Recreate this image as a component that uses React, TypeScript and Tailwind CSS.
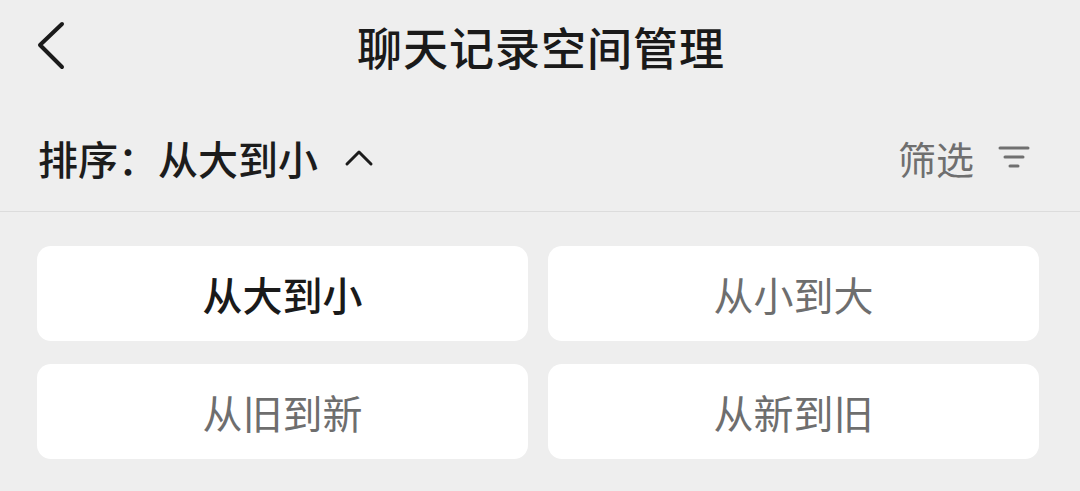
import React, { useState } from 'react';

const options = ['从大到小', '从小到大', '从旧到新', '从新到旧'];

const App: React.FC = () => {
  const [sort, setSort] = useState('从大到小');

  return (
    <div
      className="w-[1080px] h-[491px] bg-[#eeeeee] overflow-hidden flex flex-col"
      style={{ fontFamily: '"Noto Sans CJK SC", "Noto Sans", sans-serif' }}
    >
      {/* header */}
      <div className="h-[90px] shrink-0 relative flex items-center justify-center">
        <button className="absolute left-[36px] top-[20px] w-[32px] h-[52px] flex items-center justify-center">
          <svg width="32" height="52" viewBox="0 0 32 52" fill="none">
            <path d="M26 4 L4 25 L26 47" stroke="#1a1a1a" strokeWidth="4" strokeLinecap="round" strokeLinejoin="round" />
          </svg>
        </button>
        <h1 className="text-[45px] font-medium text-[#1a1a1a] leading-none tracking-[1px] pt-[2px] pl-[2px]">聊天记录空间管理</h1>
      </div>

      {/* sort row */}
      <div className="h-[122px] shrink-0 flex items-center justify-between pl-[38px] pr-[50px] pt-[14px] border-b border-[#dcdcdc]">
        <div className="flex items-center">
          <span className="text-[40px] font-medium text-[#1c1c1c] leading-none">排序：{sort}</span>
          <svg className="ml-[26px]" width="30" height="20" viewBox="0 0 30 20" fill="none">
            <path d="M3 16 L15 4 L27 16" stroke="#1c1c1c" strokeWidth="3" strokeLinecap="round" strokeLinejoin="round" />
          </svg>
        </div>
        <div className="flex items-center">
          <span className="text-[38px] text-[#6f6f6f] leading-none">筛选</span>
          <svg className="ml-[24px]" width="32" height="26" viewBox="0 0 32 26" fill="none">
            <path d="M2 3 H30 M7 12 H25 M12 21 H20" stroke="#707070" strokeWidth="3" strokeLinecap="round" />
          </svg>
        </div>
      </div>

      {/* options */}
      <div className="grid grid-cols-2 gap-x-[20px] gap-y-[23px] px-[37px] pt-[34px] pr-[41px]">
        {options.map(opt => {
          const active = opt === sort;
          return (
            <button
              key={opt}
              onClick={() => setSort(opt)}
              className="h-[95px] rounded-[14px] bg-white flex items-center justify-center"
            >
              <span
                className={`text-[40px] leading-none ${active ? 'font-medium text-[#1a1a1a]' : 'font-normal text-[#6e6e6e]'}`}
              >
                {opt}
              </span>
            </button>
          );
        })}
      </div>
    </div>
  );
};

export default App;
